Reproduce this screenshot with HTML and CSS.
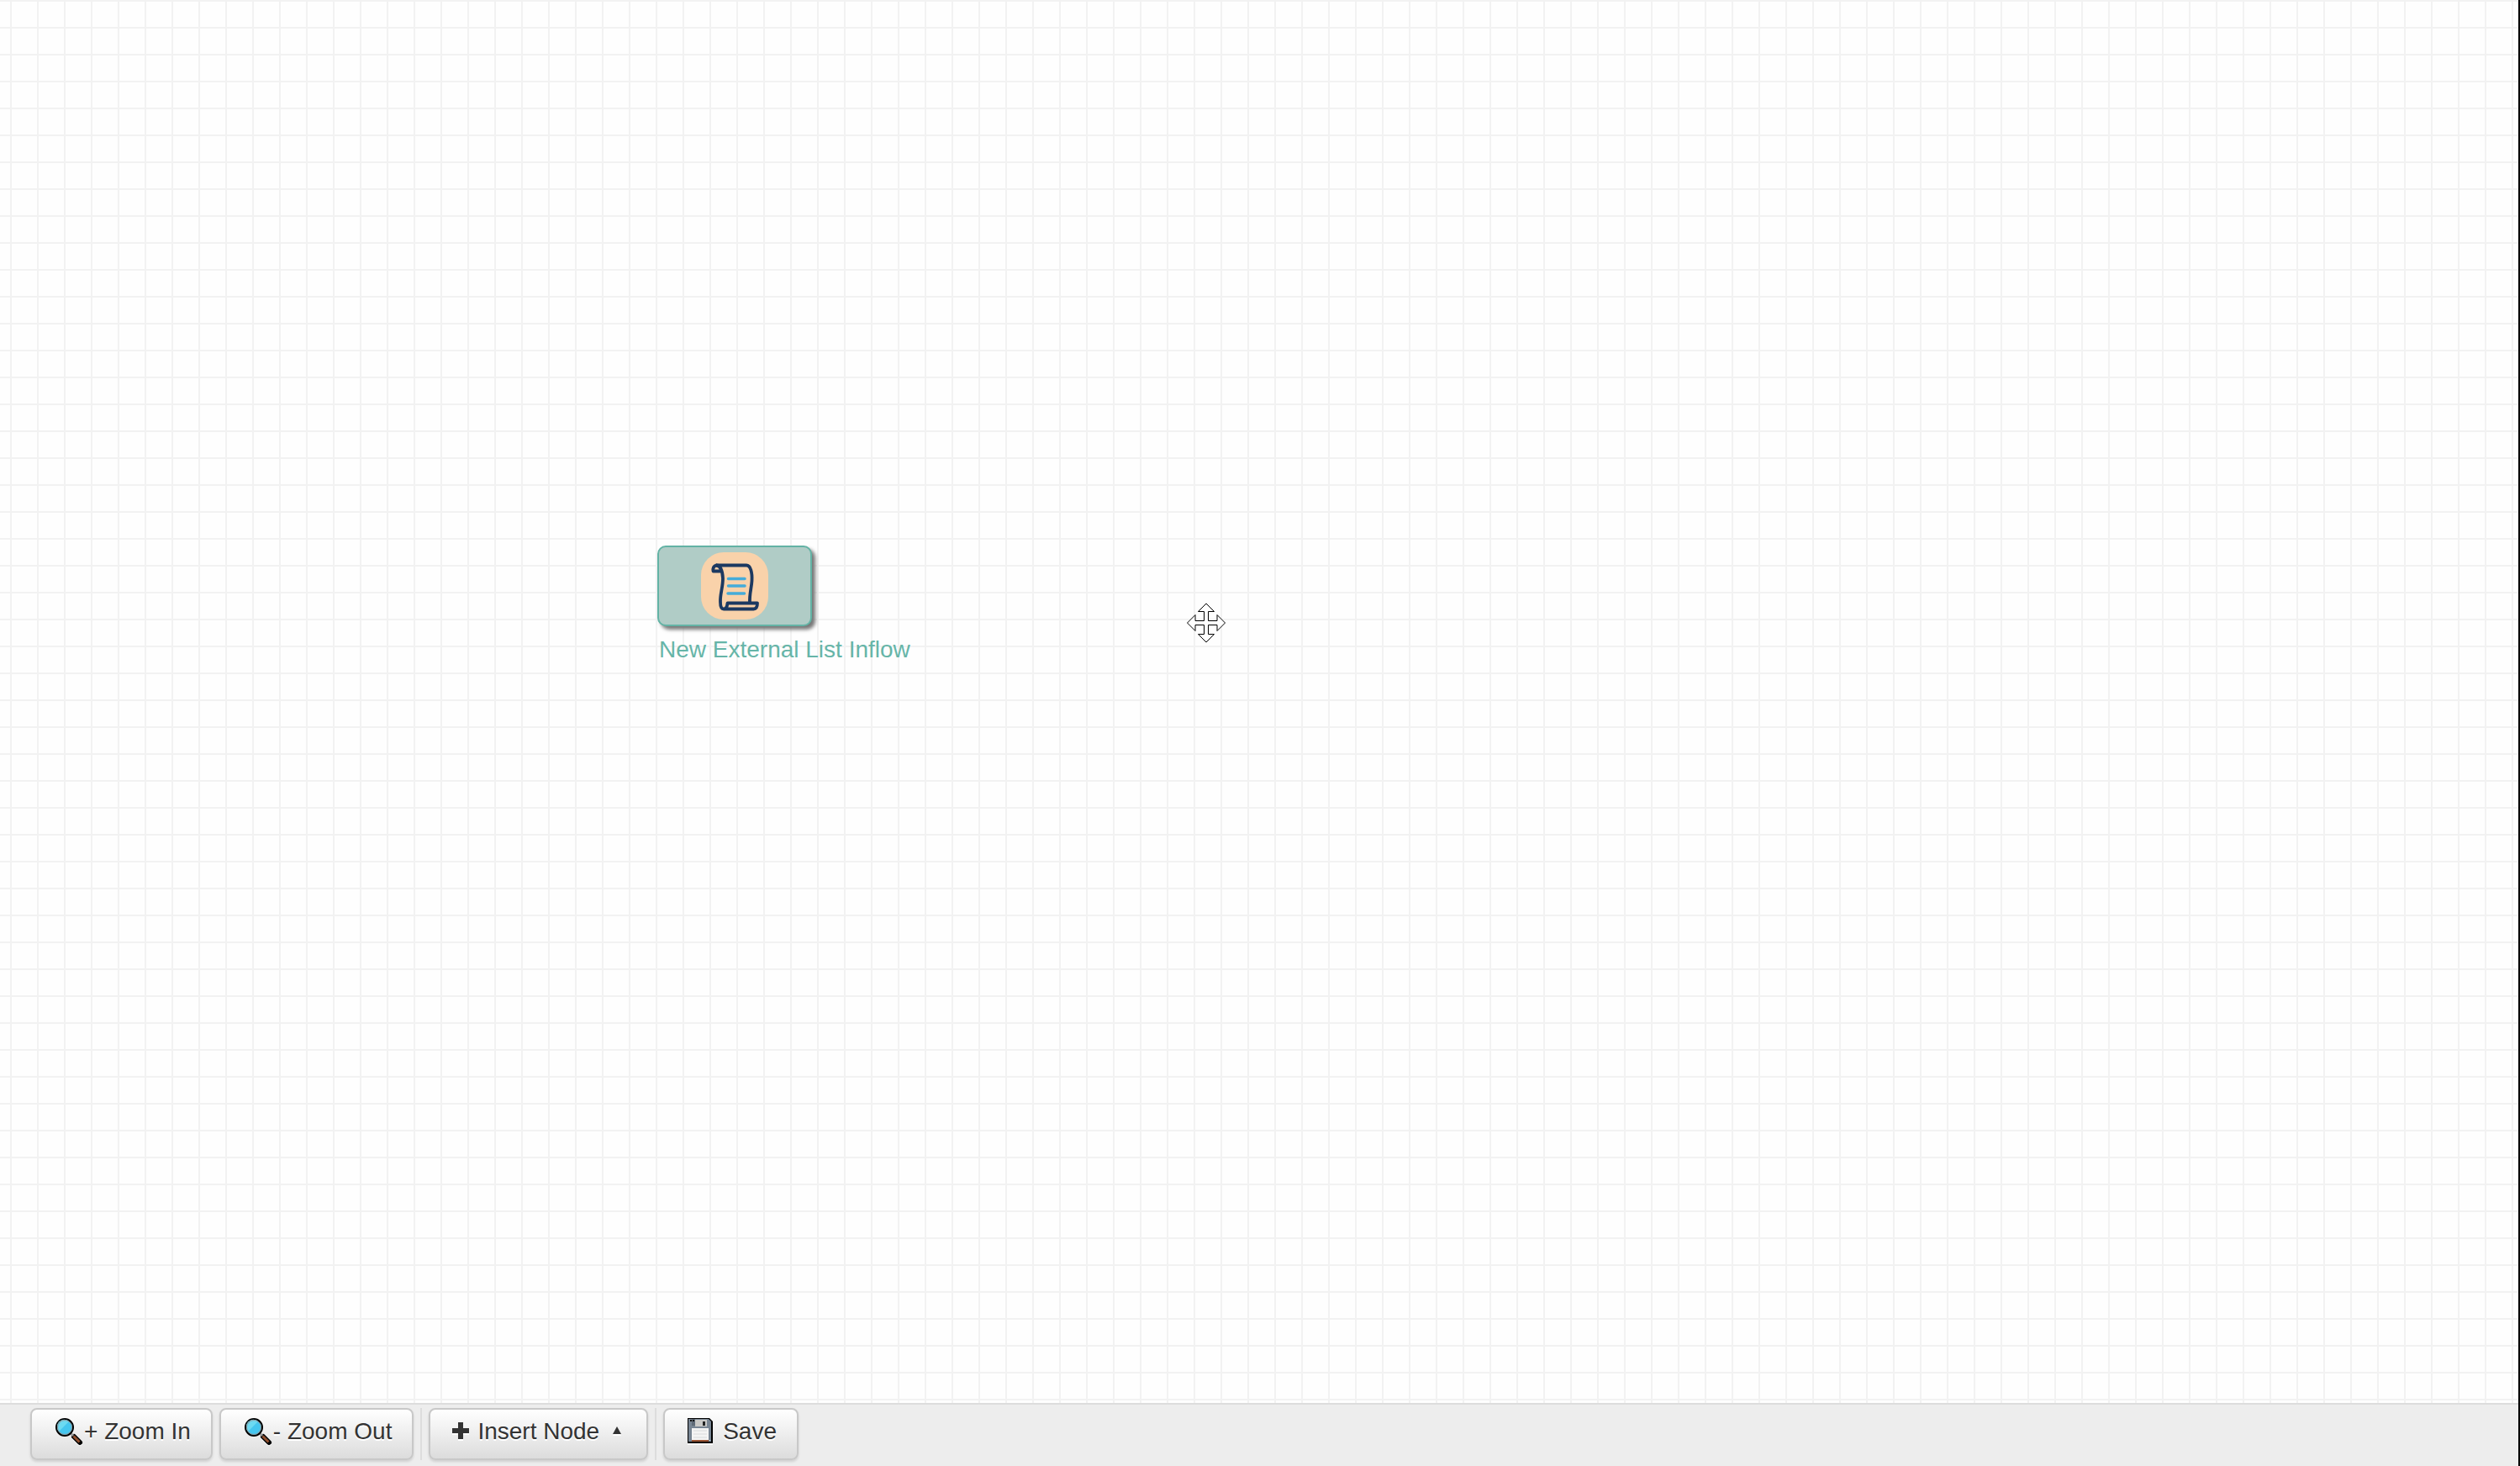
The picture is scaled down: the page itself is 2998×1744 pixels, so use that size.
FILE: index.html
```html
<!DOCTYPE html>
<html lang="en">
<head>
<meta charset="utf-8">
<title>Workflow editor</title>
<link rel="stylesheet" href="styles.css">
</head>
<body>
<main class="canvas">
  <div class="node">
    <div class="node-box">
      <svg class="node-icon" viewBox="0 0 80 80" aria-hidden="true">
        <rect width="80" height="80" rx="27" fill="#f9d2aa"/>
        <g fill="none" stroke="#1c3961" stroke-width="3.8" stroke-linejoin="round">
          <path d="M18 15.500H54C59 15.500 61 24 60.500 34C60 43 57.500 49 58 60"/>
          <path d="M18 15.500C15 16.500 14 19.500 14.500 22.500H24C24 18 22 15.500 18 15.500C23 16 25.500 22 26 31C26 42 22.500 50 23 59C23 65 24 67.500 27 67.500C30 67.500 31 65 31.500 60.500H67C67 65 66 67.500 62.500 67.500H27"/>
        </g>
        <path d="M32.500 31.500H52M32.500 40H52M32 49H51.500" fill="none" stroke="#45acd9" stroke-width="3.500" stroke-linecap="round"/>
      </svg>
    </div>
    <div class="node-label">New External List Inflow</div>
  </div>
  <svg class="move-pointer" viewBox="0 0 48 50" aria-hidden="true">
    <path d="M24 2L14.500 11.500H21.500V22.500H11V15.500L1.500 25L11 34.500V27.500H21.500V38.500H14.500L24 48L33.500 38.500H26.500V27.500H37V34.500L46.500 25L37 15.500V22.500H26.500V11.500H33.500Z" fill="#fff" stroke="#000" stroke-width="1"/>
  </svg>
</main>
<footer class="toolbar">
  <button class="btn" type="button">
    <svg class="icon-lens" viewBox="0 0 32 32" aria-hidden="true">
      <path d="M22 23L29 30" stroke="#fff" stroke-width="6" stroke-linecap="round"/>
      <path d="M22 22L29 29" stroke="#000" stroke-width="6" stroke-linecap="round"/>
      <path d="M17.500 17.500L21 21" stroke="#999" stroke-width="3"/>
      <path d="M21.500 21.500L28.500 28.500" stroke="#92502f" stroke-width="3"/>
      <circle cx="11" cy="11" r="10" fill="#45c6ef" stroke="#000" stroke-width="2"/>
      <path d="M4 16A8.500 8.500 0 0 1 16 4Z" fill="#6cdaf2"/>
      <circle cx="11" cy="11" r="8.500" fill="none" stroke="#8e9599" stroke-width="1"/>
    </svg>
    <span>+ Zoom In</span>
  </button>
  <button class="btn" type="button">
    <svg class="icon-lens" viewBox="0 0 32 32" aria-hidden="true">
      <path d="M22 23L29 30" stroke="#fff" stroke-width="6" stroke-linecap="round"/>
      <path d="M22 22L29 29" stroke="#000" stroke-width="6" stroke-linecap="round"/>
      <path d="M17.500 17.500L21 21" stroke="#999" stroke-width="3"/>
      <path d="M21.500 21.500L28.500 28.500" stroke="#92502f" stroke-width="3"/>
      <circle cx="11" cy="11" r="10" fill="#45c6ef" stroke="#000" stroke-width="2"/>
      <path d="M4 16A8.500 8.500 0 0 1 16 4Z" fill="#6cdaf2"/>
      <circle cx="11" cy="11" r="8.500" fill="none" stroke="#8e9599" stroke-width="1"/>
    </svg>
    <span>- Zoom Out</span>
  </button>
  <span class="divider"></span>
  <button class="btn btn-menu" type="button" aria-haspopup="menu">
    <svg class="icon-plus" viewBox="0 0 20 22" aria-hidden="true">
      <path d="M7 2H13V9H20V15H13V22H7V15H0V9H7Z" fill="#fff"/>
      <path d="M7 0H13V7H20V13H13V20H7V13H0V7H7Z" fill="#333"/>
    </svg>
    <span>Insert Node</span>
    <svg class="icon-caret" viewBox="0 0 10 12" aria-hidden="true">
      <path d="M0 11L5 2L10 11Z" fill="#fff"/>
      <path d="M0 9L5 0L10 9Z" fill="#333"/>
    </svg>
  </button>
  <span class="divider"></span>
  <button class="btn btn-save" type="button">
    <svg class="icon-disk" viewBox="0 0 30 32" aria-hidden="true">
      <path d="M0 2H26L30 6V32H0Z" fill="#fff"/>
      <path d="M0 0H26L30 4V30H0Z" fill="#000"/>
      <path d="M1 1H25L28 4V28H1Z" fill="#788593"/>
      <path d="M5 1H9V9H5Z" fill="#606b77"/>
      <path d="M3 2H5V4H3ZM6 2H8V4H6Z" fill="#111"/>
      <path d="M9 2H23V10H9Z" fill="#c9c9c7"/>
      <path d="M18 4H21V9H18Z" fill="#222"/>
      <path d="M5 12H25V26H5Z" fill="#f4f4f4"/>
      <path d="M7 15H23M7 19H23M7 23H23" stroke="#d8dadc" stroke-width="1"/>
      <path d="M5 26H25V28H5Z" fill="#9b5434"/>
      <path d="M26 26H27V27H26Z" fill="#e4edf2"/>
    </svg>
    <span>Save</span>
  </button>
</footer>
</body>
</html>
```
FILE: styles.css
```css
* {
  box-sizing: border-box;
}

body {
  margin: 0;
  min-height: 100vh;
  display: flex;
  flex-direction: column;
  border-right: 2px solid #000;
  font-family: Arial, "Liberation Sans", sans-serif;
  font-size: 28px;
  color: #333;
}

.canvas {
  flex: 1;
  position: relative;
  overflow: hidden;
  background-color: #fefefe;
  background-image:
    linear-gradient(to right, #f2f2f2 2px, transparent 2px),
    linear-gradient(to bottom, #f2f2f2 2px, transparent 2px);
  background-size: 32px 32px;
  background-position: 12px 0, 0 0;
}

/* Nodes sit at their own place on the free canvas */
.node {
  position: absolute;
  left: 782px;
  top: 649px;
}

.node-box {
  display: flex;
  align-items: center;
  justify-content: center;
  width: 184px;
  height: 96px;
  border: 2px solid #63b3a5;
  border-radius: 10px;
  background: #b0ccc6;
  box-shadow: 4px 4px 4px #777;
}

.node-icon {
  width: 80px;
  height: 80px;
}

.node-label {
  padding: 8px 2px;
  line-height: 40px;
  white-space: nowrap;
  color: #66b5a8;
}

.move-pointer {
  position: absolute;
  left: 1411px;
  top: 716px;
  width: 48px;
  height: 50px;
}

.toolbar {
  display: flex;
  gap: 8px;
  padding: 4px 36px 7px;
  border-top: 2px solid #ddd;
  background: #ededed;
}

.btn {
  display: flex;
  align-items: center;
  gap: 2px;
  height: 62px;
  padding: 6px 24px 12px 28px;
  border: 2px solid #c8c8c8;
  border-radius: 8px;
  background: linear-gradient(#fff, #dcdcdc);
  box-shadow: 0 2px 3px rgba(0, 0, 0, 0.12);
  font: inherit;
  line-height: 40px;
  color: #333;
  text-shadow: 0 2px 0 #fff;
  white-space: nowrap;
}

.btn-menu {
  gap: 10px;
  padding-right: 30px;
  padding-left: 26px;
}

.btn-menu .icon-caret {
  margin-left: 6px;
}

.btn-save {
  gap: 12px;
  padding-left: 27px;
}

.divider {
  width: 2px;
  background: #ddd;
}

.icon-lens {
  width: 32px;
  height: 32px;
  overflow: visible;
}

.icon-plus {
  width: 20px;
  height: 22px;
}

.icon-caret {
  width: 10px;
  height: 12px;
}

.icon-disk {
  width: 30px;
  height: 32px;
}
```
